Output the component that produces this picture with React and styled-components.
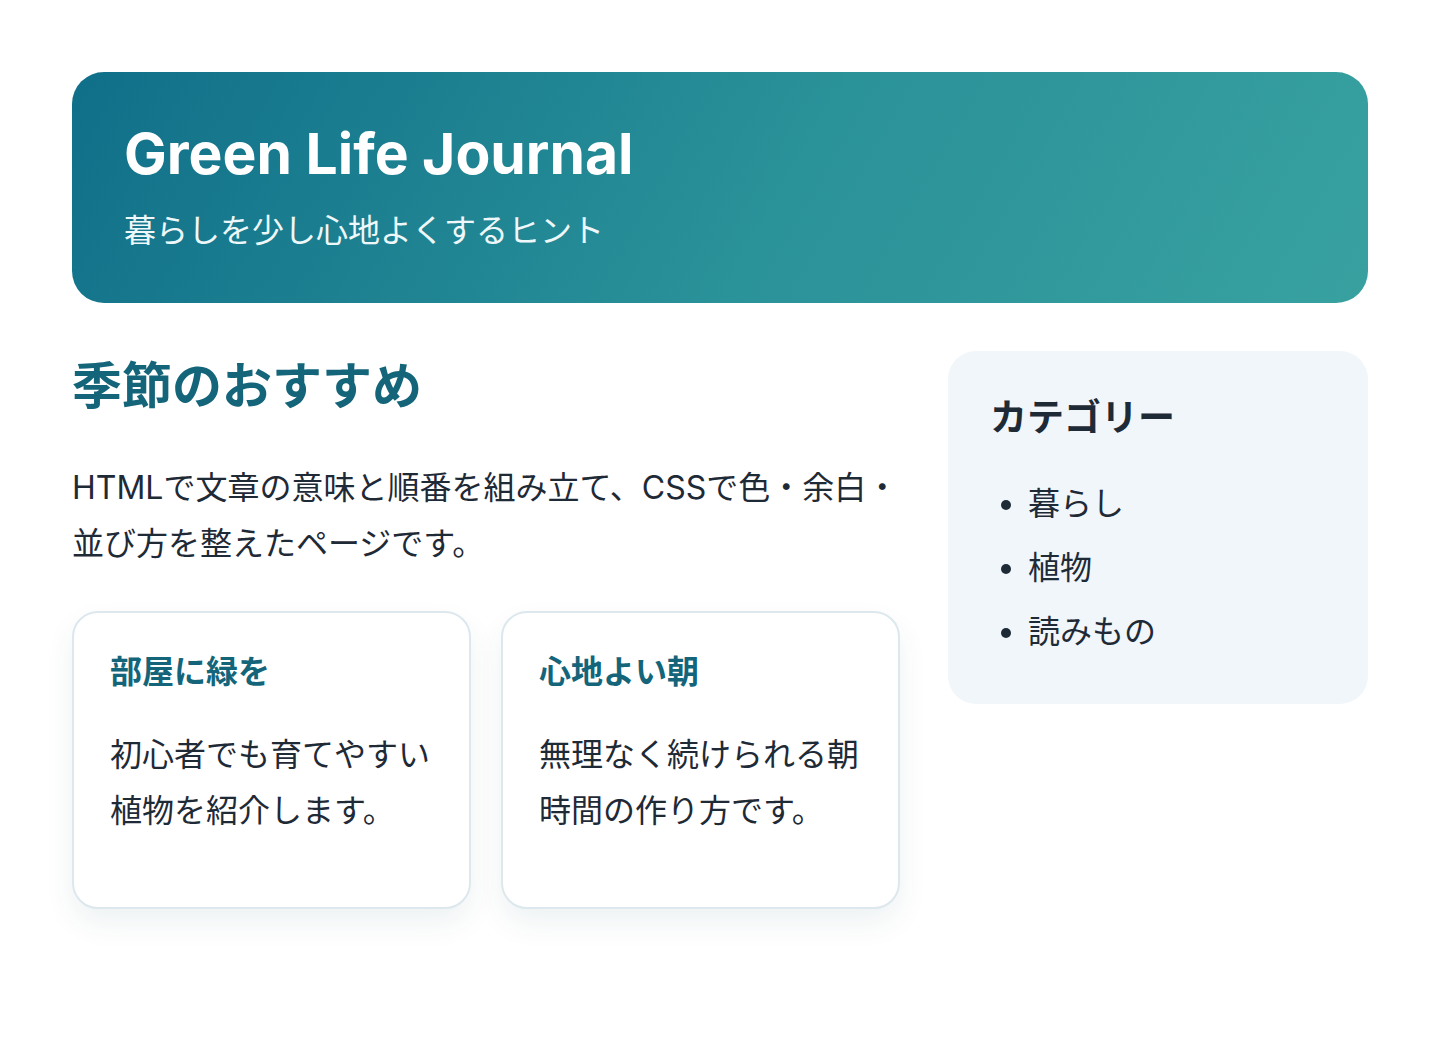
import React from 'react'
import styled, { createGlobalStyle } from 'styled-components'

const GlobalStyle = createGlobalStyle`
  * { box-sizing: border-box; }
  body {
    margin: 0;
    background: #ffffff;
    color: #1f2a37;
    font-family: Inter, "Noto Sans CJK JP", sans-serif;
  }
`

const cards = [
  { id: 1, title: '部屋に緑を', text: '初心者でも育てやすい植物を紹介します。' },
  { id: 2, title: '心地よい朝', text: '無理なく続けられる朝時間の作り方です。' },
]

const categories = ['暮らし', '植物', '読みもの']

const App = () => {
  return (
    <>
      <GlobalStyle />
      <Page>
        <Header>
          <Title>Green Life Journal</Title>
          <Tagline>暮らしを少し心地よくするヒント</Tagline>
        </Header>
        <Layout>
          <Main>
            <SectionTitle>季節のおすすめ</SectionTitle>
            <Lead>HTMLで文章の意味と順番を組み立て、CSSで色・余白・並び方を整えたページです。</Lead>
            <CardGrid>
              {cards.map((el) => (
                <Card key={el.id}>
                  <CardTitle>{el.title}</CardTitle>
                  <CardText>{el.text}</CardText>
                </Card>
              ))}
            </CardGrid>
          </Main>
          <Sidebar>
            <SideTitle>カテゴリー</SideTitle>
            <SideList>
              {categories.map((c) => (
                <SideItem key={c}>{c}</SideItem>
              ))}
            </SideList>
          </Sidebar>
        </Layout>
      </Page>
    </>
  )
}

export default App

const Page = styled.div`
  padding: 72px;
  min-height: 1040px;
`

const Header = styled.header`
  padding: 48px 52px;
  border-radius: 32px;
  background: linear-gradient(120deg, #106f89 0%, #2a9299 55%, #38a1a0 100%);
  color: #ffffff;
`

const Title = styled.h1`
  margin: 0;
  font-size: 57px;
  line-height: 67px;
  font-weight: 700;
  letter-spacing: 0;
`

const Tagline = styled.p`
  margin: 20px 0 0;
  font-size: 32px;
  line-height: 1.5;
  color: #eef8fa;
`

const Layout = styled.div`
  display: grid;
  grid-template-columns: 1fr 420px;
  gap: 48px;
  margin-top: 48px;
  align-items: start;
`

const Main = styled.main``

const SectionTitle = styled.h2`
  margin: 1px 0 0;
  font-size: 50px;
  line-height: 68px;
  font-weight: 700;
  color: #14657a;
`

const Lead = styled.p`
  margin: 40px 0 0;
  font-size: 32px;
  line-height: 56px;
`

const CardGrid = styled.div`
  display: grid;
  grid-template-columns: 1fr 1fr;
  gap: 30px;
  margin-top: 39px;
`

const Card = styled.article`
  padding: 37px 36px 36px;
  border: 2px solid #dce8ee;
  border-radius: 26px;
  background: #ffffff;
  box-shadow: 0 14px 30px rgba(20, 70, 90, 0.07);
`

const CardTitle = styled.h3`
  margin: 0;
  font-size: 32px;
  line-height: 1.4;
  font-weight: 700;
  color: #14657a;
`

const CardText = styled.p`
  margin: 32px 0;
  font-size: 32px;
  line-height: 56px;
`

const Sidebar = styled.aside`
  padding: 42px 42px 44px;
  border-radius: 28px;
  background: #f0f6f9;
`

const SideTitle = styled.h2`
  margin: 0;
  font-size: 37px;
  line-height: 50px;
  font-weight: 700;
  color: #1f2a37;
`

const SideList = styled.ul`
  margin: 33px 0 0;
  padding-left: 38px;
`

const SideItem = styled.li`
  font-size: 32px;
  line-height: 56px;
  & + & {
    margin-top: 8px;
  }
`
